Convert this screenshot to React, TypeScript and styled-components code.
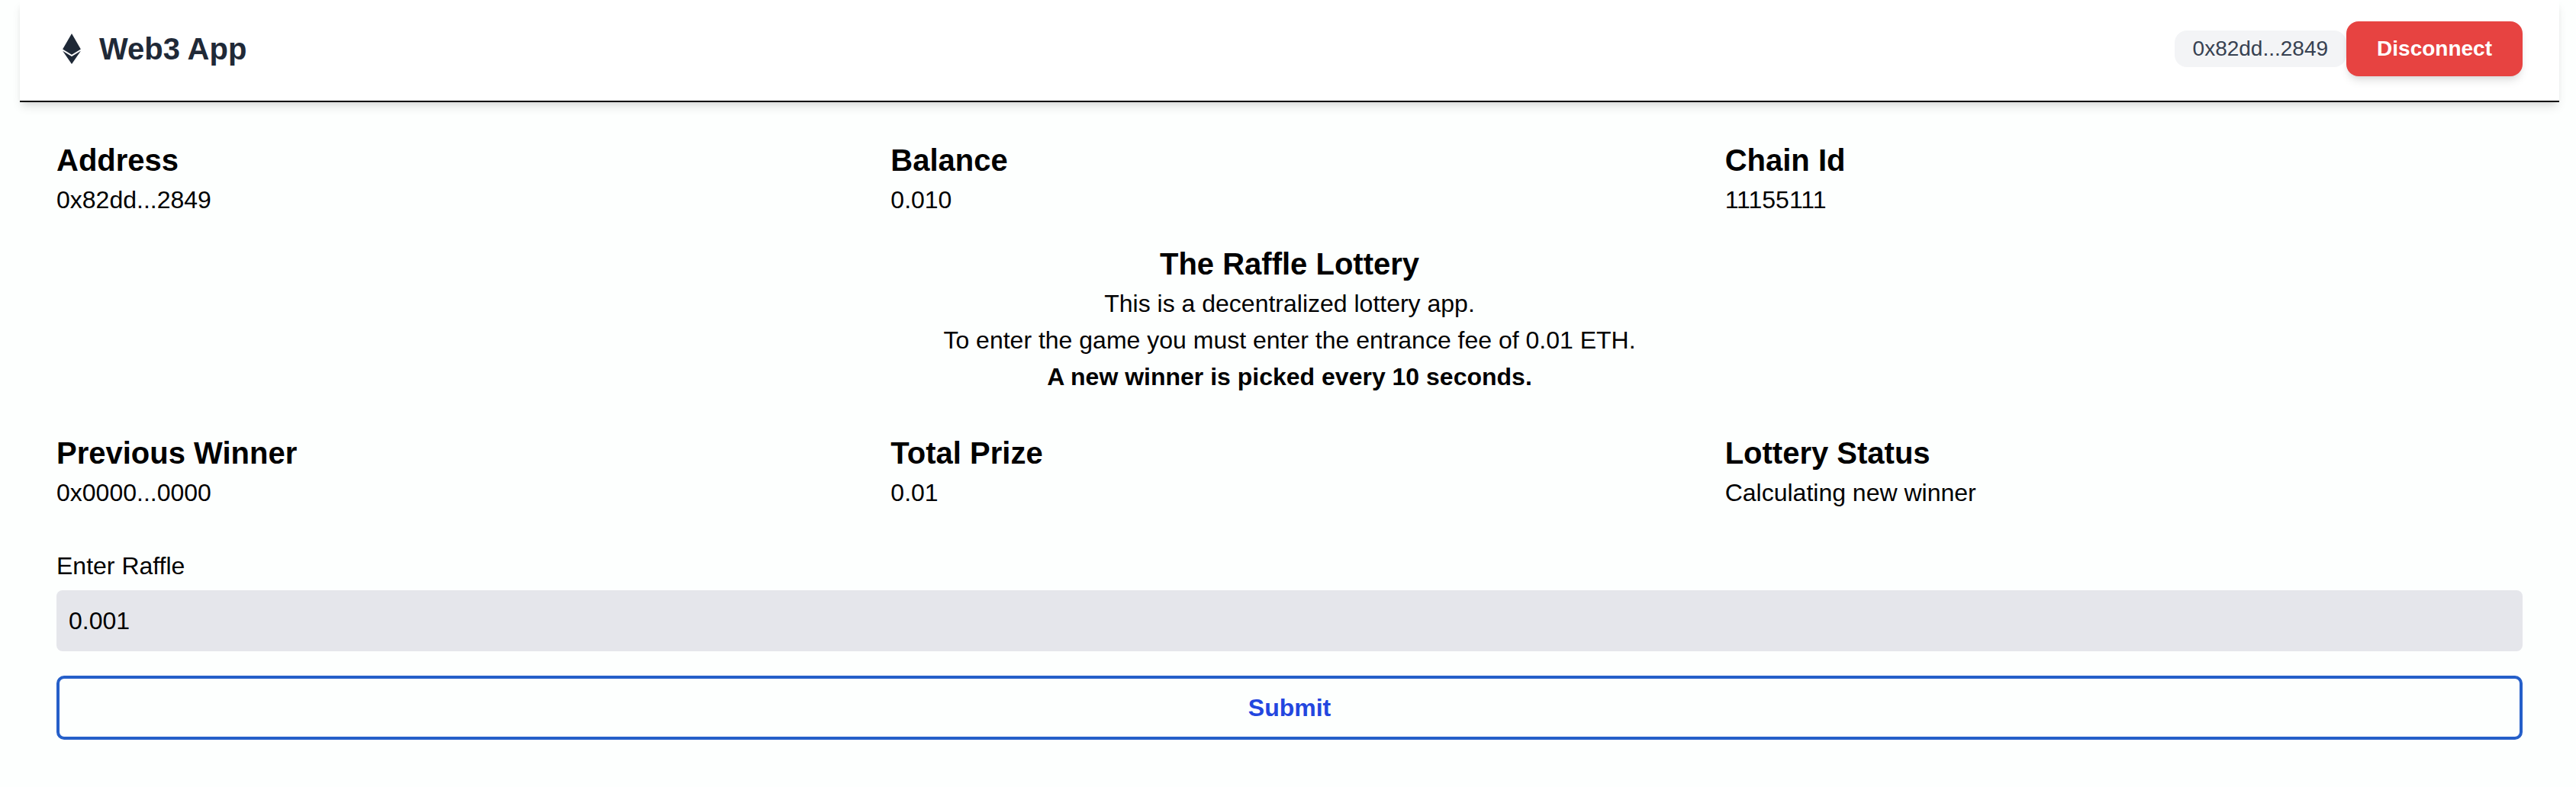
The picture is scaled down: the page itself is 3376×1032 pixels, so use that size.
import React, { useState } from "react";
import styled, { createGlobalStyle } from "styled-components";
import { FaEthereum } from "react-icons/fa";

const GlobalStyle = createGlobalStyle`
  *, *::before, *::after {
    box-sizing: border-box;
  }
  body {
    margin: 0;
    background: #fdfffe;
    color: #000;
    font-family: "Liberation Sans", Arial, Helvetica, sans-serif;
    font-size: 32px;
    line-height: 48px;
  }
  h1, h2, p, dl, dt, dd {
    margin: 0;
  }
`;

const Page = styled.div`
  padding: 0 22px 62px 26px;
`;

const Header = styled.header`
  display: flex;
  align-items: center;
  justify-content: space-between;
  padding: 28px 48px 32px;
  background: #fff;
  border-bottom: 2px solid #000;
  box-shadow: 0 8px 12px -2px rgba(0, 0, 0, 0.1), 0 4px 8px -4px rgba(0, 0, 0, 0.1);
`;

const Brand = styled.div`
  display: flex;
  align-items: center;
  gap: 16px;
  color: #1f2937;
`;

const BrandName = styled.h1`
  font-size: 40px;
  line-height: 56px;
  font-weight: 700;
`;

const Account = styled.div`
  display: flex;
  align-items: center;
`;

const AddressPill = styled.span`
  padding: 4px 24px;
  border-radius: 16px;
  background: #f3f4f6;
  color: #374151;
  font-size: 28px;
  line-height: 40px;
`;

const DisconnectButton = styled.button`
  padding: 16px 40px;
  border: 0;
  border-radius: 16px;
  background: #e74341;
  color: #fff;
  font: inherit;
  font-size: 28px;
  line-height: 40px;
  font-weight: 700;
  box-shadow: 0 8px 12px -2px rgba(0, 0, 0, 0.1), 0 4px 8px -4px rgba(0, 0, 0, 0.1);
  cursor: pointer;
`;

const Main = styled.main`
  display: flex;
  flex-direction: column;
  padding: 48px 48px 0;
`;

const Stats = styled.dl`
  display: grid;
  grid-template-columns: repeat(3, 1fr);
  gap: 48px;
`;

const StatLabel = styled.dt`
  font-size: 40px;
  line-height: 56px;
  font-weight: 700;
`;

const StatValue = styled.dd``;

const Intro = styled.section`
  margin: 32px 0 48px;
  text-align: center;
`;

const IntroTitle = styled.h2`
  font-size: 40px;
  line-height: 56px;
  font-weight: 700;
`;

const IntroText = styled.p<{ $strong?: boolean }>`
  font-weight: ${({ $strong }) => ($strong ? 700 : 400)};
`;

const Form = styled.form`
  display: flex;
  flex-direction: column;
  margin-top: 48px;
`;

const AmountInput = styled.input`
  width: 100%;
  margin: 8px 0 32px;
  padding: 16px;
  border: 0;
  border-radius: 8px;
  background: #e5e6eb;
  color: #000;
  font: inherit;
  height: 80px;
`;

const SubmitButton = styled.button`
  padding: 14px 16px;
  border: 4px solid #255fc9;
  border-radius: 10px;
  background: transparent;
  color: #2346df;
  font: inherit;
  font-weight: 700;
  cursor: pointer;
`;

type Stat = { label: string; value: string };

const walletStats: Stat[] = [
  { label: "Address", value: "0x82dd...2849" },
  { label: "Balance", value: "0.010" },
  { label: "Chain Id", value: "11155111" },
];

const raffleStats: Stat[] = [
  { label: "Previous Winner", value: "0x0000...0000" },
  { label: "Total Prize", value: "0.01" },
  { label: "Lottery Status", value: "Calculating new winner" },
];

function StatRow({ items }: { items: Stat[] }) {
  return (
    <Stats>
      {items.map(({ label, value }) => (
        <div key={label}>
          <StatLabel>{label}</StatLabel>
          <StatValue>{value}</StatValue>
        </div>
      ))}
    </Stats>
  );
}

export default function App() {
  const [amount, setAmount] = useState("0.001");

  return (
    <>
      <GlobalStyle />
      <Page>
        <Header>
          <Brand>
            <FaEthereum size={40} aria-hidden="true" />
            <BrandName>Web3 App</BrandName>
          </Brand>
          <Account>
            <AddressPill>0x82dd...2849</AddressPill>
            <DisconnectButton type="button">Disconnect</DisconnectButton>
          </Account>
        </Header>
        <Main>
          <StatRow items={walletStats} />
          <Intro>
            <IntroTitle>The Raffle Lottery</IntroTitle>
            <IntroText>This is a decentralized lottery app.</IntroText>
            <IntroText>To enter the game you must enter the entrance fee of 0.01 ETH.</IntroText>
            <IntroText $strong>A new winner is picked every 10 seconds.</IntroText>
          </Intro>
          <StatRow items={raffleStats} />
          <Form onSubmit={(event) => event.preventDefault()}>
            <label htmlFor="amount">Enter Raffle</label>
            <AmountInput
              id="amount"
              type="text"
              inputMode="decimal"
              value={amount}
              onChange={(event) => setAmount(event.target.value)}
            />
            <SubmitButton type="submit">Submit</SubmitButton>
          </Form>
        </Main>
      </Page>
    </>
  );
}
